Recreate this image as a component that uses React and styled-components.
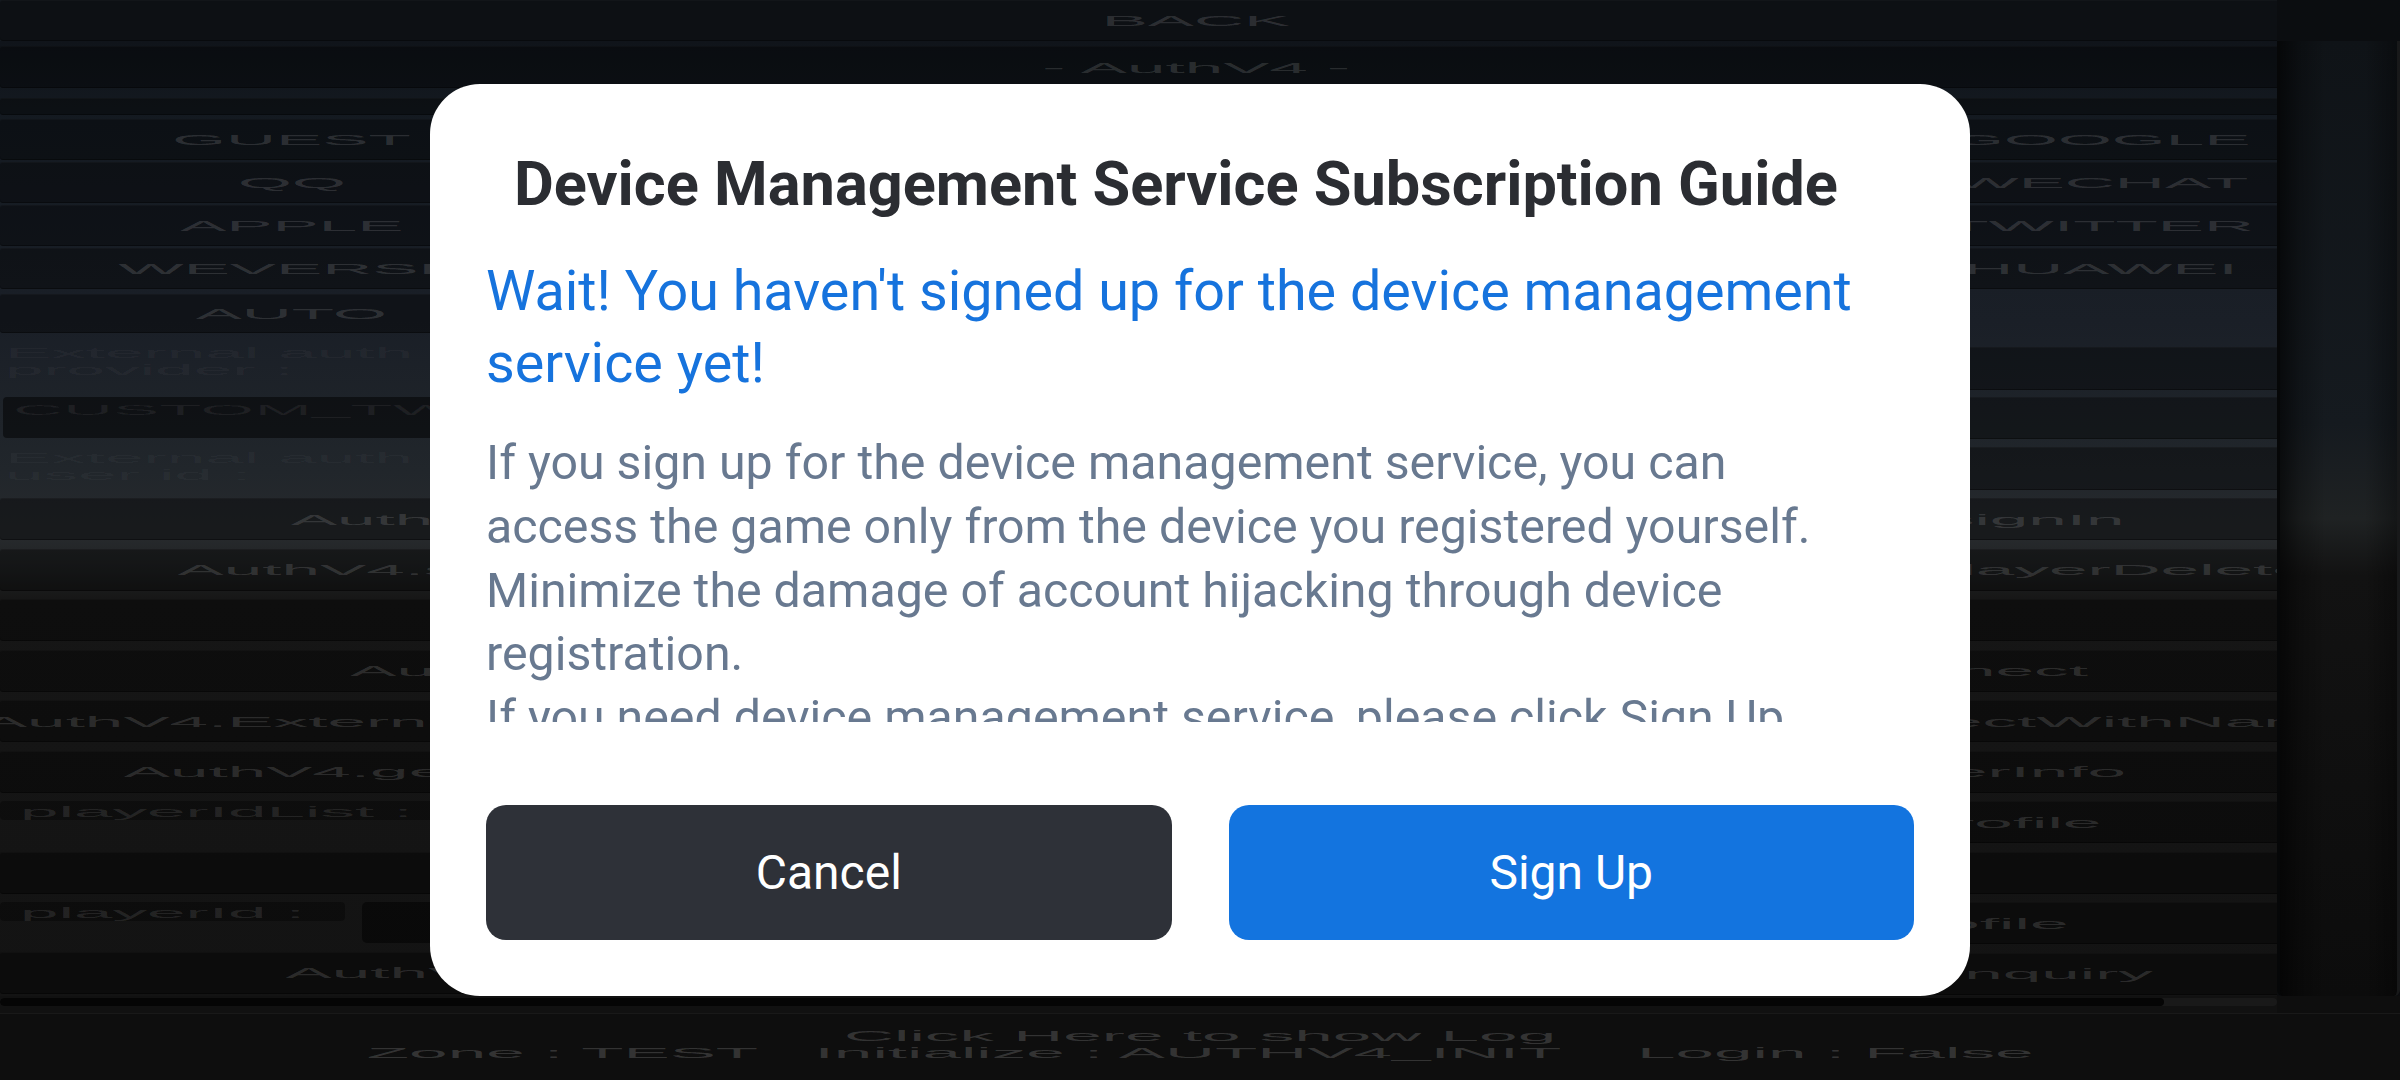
import React from "react";
import styled, { createGlobalStyle } from "styled-components";

const GlobalStyle = createGlobalStyle`
  html, body {
    margin: 0;
    padding: 0;
    background: #0b0c0e;
  }
  body {
    font-family: Roboto, "Noto Sans", Arial, sans-serif;
    overflow: hidden;
  }
`;

// ---------- game debug screen (behind the popup) ----------

const Screen = styled.div`
  width: 2400px;
  height: 1080px;
  display: grid;
  grid-template-columns: 2277px 123px;
  grid-template-rows: 41px 955px 17px 67px;
  background: #0b0c0e;
  overflow: hidden;
`;

const Clip = styled.div`
  overflow: hidden;
  background: ${(p) => p.$bg || "transparent"};
`;

const Viewport = styled(Clip)`
  background: linear-gradient(
    to bottom,
    #10141a 0px,
    #141a21 80px,
    #1a1f27 280px,
    #21262b 430px,
    #272a2d 495px,
    #1f2122 530px,
    #161616 560px,
    #131313 100%
  );
`;

const Wide = styled.div`
  width: 2392px;
  display: flex;
  flex-direction: column;
  padding-top: ${(p) => p.$pt || 0}px;
`;

const Corner = styled.div`
  background: ${(p) => p.$bg};
`;

const Btn = styled.div`
  height: ${(p) => p.$h || 42}px;
  margin-top: ${(p) => p.$mt || 0}px;
  flex-shrink: 0;
  background: rgba(0, 0, 0, 0.36);
  border-radius: 3px;
  box-shadow: inset 0 1px 0 rgba(255, 255, 255, 0.025),
    inset 0 -1px 0 rgba(0, 0, 0, 0.35);
  display: flex;
  align-items: center;
  justify-content: center;
  overflow: hidden;
`;

const Stretch = styled.span`
  display: inline-block;
  flex-shrink: 0;
  font-family: "Liberation Sans", Arial, sans-serif;
  font-size: 15.4px;
  line-height: 17px;
  white-space: pre;
  color: ${(p) => p.$c || "rgba(255, 255, 255, 0.14)"};
  transform: scaleX(4.5);
  transform-origin: ${(p) => (p.$left ? "left top" : "center")};
`;

const Grid4 = styled.div`
  margin-top: 4px;
  display: grid;
  grid-template-columns: repeat(4, 1fr);
  column-gap: 20px;
  row-gap: 2px;
`;

const Halves = styled.div`
  display: grid;
  grid-template-columns: 1fr 1fr;
  column-gap: 20px;
  align-items: start;
`;

const Stack = styled.div`
  display: flex;
  flex-direction: column;
`;

const Pair = styled.div`
  margin-top: ${(p) => p.$mt || 0}px;
  display: grid;
  grid-template-columns: 1fr 1fr;
  column-gap: 20px;
`;

const Label = styled.div`
  height: ${(p) => p.$h}px;
  margin-top: ${(p) => p.$mt || 0}px;
  box-sizing: border-box;
  padding: 11px 0 0 5px;
  overflow: hidden;
`;

const Input = styled.div`
  height: ${(p) => p.$h || 41}px;
  margin: ${(p) => p.$mt || 0}px 0 0 3px;
  box-sizing: border-box;
  padding: 3px 0 0 10px;
  background: rgba(0, 0, 0, 0.5);
  border-radius: 4px;
  overflow: hidden;
`;

const FieldBlock = styled.div`
  height: 49px;
  margin-top: ${(p) => p.$mt || 0}px;
`;

const FieldTag = styled.div`
  width: ${(p) => (p.$w ? `${p.$w}px` : "auto")};
  height: 19px;
  margin-top: ${(p) => p.$mt || 0}px;
  box-sizing: border-box;
  padding: 1px 0 0 20px;
  background: rgba(0, 0, 0, 0.32);
  border-radius: 4px;
  flex-shrink: 0;
  overflow: hidden;
`;

const FieldRow = styled.div`
  height: 41px;
  margin-top: ${(p) => p.$mt || 0}px;
  display: flex;
  gap: 17px;
  align-items: flex-start;
`;

const FieldBox = styled.div`
  flex: 1;
  height: 41px;
  margin-top: 1px;
  background: rgba(0, 0, 0, 0.5);
  border-radius: 5px;
`;

const VBar = styled.div`
  border-left: 3px solid #060708;
  border-right: 3px solid #18191a;
  border-radius: 0 0 6px 6px;
  background: linear-gradient(
      to right,
      rgba(0, 0, 0, 0.6) 0px,
      rgba(0, 0, 0, 0.25) 20px,
      rgba(0, 0, 0, 0) 45px,
      rgba(0, 0, 0, 0) 85px,
      rgba(0, 0, 0, 0.35) 117px
    ),
    linear-gradient(
      to bottom,
      #0f1317 0%,
      #151a1f 40%,
      #1f2223 50%,
      #121212 56%,
      #0c0c0c 100%
    );
`;

const HBarCell = styled.div`
  background: #111111;
  padding-top: 2px;
`;

const HTrack = styled.div`
  height: 8px;
  border-radius: 4px;
  background: #191919;
  overflow: hidden;
`;

const HThumb = styled.div`
  width: 2164px;
  height: 100%;
  border-radius: 4px;
  background: #050505;
`;

const Footer = styled.div`
  grid-column: 1 / 3;
  background: #0e0e0e;
  border-top: 1px solid #191919;
  padding-top: 13px;
  display: flex;
  flex-direction: column;
  align-items: center;
`;

// ---------- popup ----------

const Backdrop = styled.div`
  position: fixed;
  inset: 0;
  display: flex;
  align-items: center;
  justify-content: center;
`;

const Dialog = styled.div`
  width: 1540px;
  height: 912px;
  box-sizing: border-box;
  padding: 64px 56px 56px;
  background: #ffffff;
  border-radius: 50px;
  display: flex;
  flex-direction: column;
  font-family: Roboto, "Noto Sans", sans-serif;
`;

const Title = styled.h1`
  margin: 0;
  padding-right: 48px;
  font-size: 61.3px;
  line-height: 73px;
  font-weight: 700;
  color: #2b2d32;
  text-align: center;
  white-space: nowrap;
`;

const Lead = styled.p`
  margin: 34px 0 0;
  font-size: 55.7px;
  line-height: 72px;
  color: #1673dd;
  white-space: nowrap;
`;

const BodyScroll = styled.div`
  margin-top: 32px;
  height: 291px;
  overflow: hidden;
`;

const Body = styled.p`
  margin: 0;
  font-size: 48.3px;
  line-height: 63.75px;
  color: #687990;
  white-space: nowrap;
`;

const Actions = styled.div`
  margin-top: 83px;
  display: flex;
  gap: 57px;
`;

const ActionButton = styled.button`
  flex: 1;
  height: 135px;
  padding: 0;
  border: none;
  border-radius: 20px;
  background: ${(p) => (p.$primary ? "#1374df" : "#2e3138")};
  color: #ffffff;
  font-family: Roboto, "Noto Sans", sans-serif;
  font-size: 48px;
`;

const providers = [
  ["GUEST", "FACEBOOK", "HIVE", "GOOGLE"],
  ["QQ", "VK", "LINE", "WECHAT"],
  ["APPLE", "GAMECENTER", "PLAYGAMES", "TWITTER"],
  ["WEVERSE", "SIGNIN_APPLE", "STEAM", "HUAWEI"],
];

const leftCalls = [
  "AuthV4.signInWithAuthKey",
  "",
  "AuthV4.signOut",
  "AuthV4.ExternalAuthConnectWithName",
  "AuthV4.getProviderFriendsList",
];

const rightCalls = [
  "AuthV4.Helper.signIn",
  "AuthV4.Helper.showPlayerDelete",
  "",
  "AuthV4.disconnect",
  "AuthV4.Helper.disconnectWithName",
  "AuthV4.getPlayerInfo",
  "AuthV4.showProfile",
  "",
  "AuthV4.getProfile",
  "AuthV4.showMyInquiry",
];

function Background() {
  return (
    <Screen>
      <Clip $bg="#151a20">
        <Wide>
          <Btn $h={41}>
            <Stretch>BACK</Stretch>
          </Btn>
        </Wide>
      </Clip>
      <Corner $bg="#0b0d10" />

      <Viewport>
        <Wide $pt={5}>
          <Btn>
            <Stretch>- AuthV4 -</Stretch>
          </Btn>
          <Btn $h={17} $mt={10} />
          <Grid4>
            {providers.flat().map((name) => (
              <Btn key={name} $h={41}>
                <Stretch>{name}</Stretch>
              </Btn>
            ))}
          </Grid4>

          <Halves>
            <Stack>
              <Pair $mt={5}>
                <Btn $h={39}>
                  <Stretch>AUTO</Stretch>
                </Btn>
                <Btn $h={39} />
              </Pair>
              <Label $h={64}>
                <Stretch $left $c="rgba(255,255,255,0.05)">
                  {"External auth\nprovider :"}
                </Stretch>
              </Label>
              <Input>
                <Stretch $left $c="rgba(255,255,255,0.06)">
                  CUSTOM_TWITTER
                </Stretch>
              </Input>
              <Label $h={59}>
                <Stretch $left $c="rgba(255,255,255,0.04)">
                  {"External auth\nuser id :"}
                </Stretch>
              </Label>
              <Btn $mt={1}>
                <Stretch>AuthV4.showSignIn</Stretch>
              </Btn>
              {leftCalls.map((call, i) => (
                <Btn key={i} $mt={8.5}>
                  {call && <Stretch>{call}</Stretch>}
                </Btn>
              ))}
              <FieldBlock $mt={8.5}>
                <FieldTag>
                  <Stretch $left $c="rgba(255,255,255,0.1)">
                    playerIdList :
                  </Stretch>
                </FieldTag>
              </FieldBlock>
              <Btn $mt={1.5} />
              <FieldRow $mt={7.5}>
                <FieldTag $w={345} $mt={1}>
                  <Stretch $left $c="rgba(255,255,255,0.1)">
                    playerId :
                  </Stretch>
                </FieldTag>
                <FieldBox />
              </FieldRow>
              <Btn $mt={9.5}>
                <Stretch>AuthV4.showInquiry</Stretch>
              </Btn>
            </Stack>

            <Stack>
              <Label $h={54} $mt={2}>
                <Stretch $left $c="rgba(255,255,255,0.05)">
                  {"External auth\ntoken :"}
                </Stretch>
              </Label>
              <Btn $h={43} $mt={2} />
              <Btn $h={42} $mt={7} />
              <Btn $h={43} $mt={8} />
              {rightCalls.map((call, i) => (
                <Btn key={i} $mt={i === 0 ? 8 : 8.5}>
                  {call && <Stretch>{call}</Stretch>}
                </Btn>
              ))}
            </Stack>
          </Halves>
        </Wide>
      </Viewport>
      <VBar />

      <HBarCell>
        <HTrack>
          <HThumb />
        </HTrack>
      </HBarCell>
      <Corner $bg="#0e0e0e" />

      <Footer>
        <Stretch $c="rgba(255,255,255,0.16)">Click Here to show Log</Stretch>
        <Stretch $c="rgba(255,255,255,0.16)">
          {"Zone : TEST   Initialize : AUTHV4_INIT    Login : False"}
        </Stretch>
      </Footer>
    </Screen>
  );
}

function SubscriptionGuide() {
  return (
    <Backdrop>
      <Dialog>
        <Title>Device Management Service Subscription Guide</Title>
        <Lead>
          Wait! You haven't signed up for the device management
          <br />
          service yet!
        </Lead>
        <BodyScroll>
          <Body>
            If you sign up for the device management service, you can
            <br />
            access the game only from the device you registered yourself.
            <br />
            Minimize the damage of account hijacking through device
            <br />
            registration.
            <br />
            If you need device management service, please click Sign Up
            <br />
            button.
          </Body>
        </BodyScroll>
        <Actions>
          <ActionButton>Cancel</ActionButton>
          <ActionButton $primary>Sign Up</ActionButton>
        </Actions>
      </Dialog>
    </Backdrop>
  );
}

export default function App() {
  return (
    <>
      <GlobalStyle />
      <Background />
      <SubscriptionGuide />
    </>
  );
}
